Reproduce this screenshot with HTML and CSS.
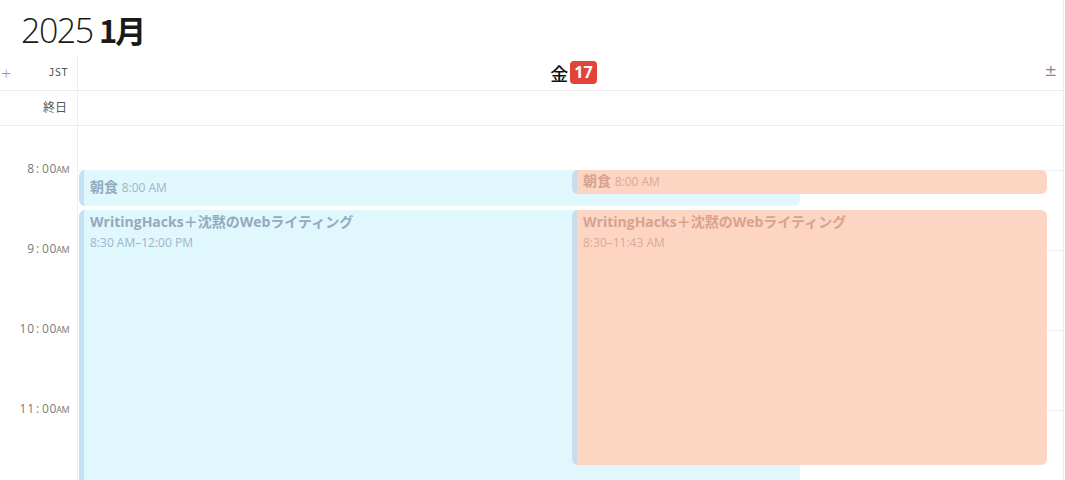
FILE: index.html
```html
<!DOCTYPE html>
<html lang="ja">
<head>
<meta charset="utf-8">
<link rel="stylesheet" href="styles.css">
</head>
<body>
<div class="cal">
  <h1 class="title"><span class="year">2025</span> <span class="month">1月</span></h1>
  <div class="head-row">
    <div class="gutter head-gutter"><span class="plus">+</span><span class="tz">JST</span></div>
    <div class="day-head"><span class="dow">金</span><span class="badge">17</span><span class="pm">±</span></div>
  </div>
  <div class="allday-row">
    <div class="gutter allday-label">終日</div>
    <div class="allday-cell"></div>
  </div>
  <div class="body">
    <div class="gutter times">
      <div class="tl">8<span class="colon">:</span>00<small>AM</small></div>
      <div class="tl">9<span class="colon">:</span>00<small>AM</small></div>
      <div class="tl">10<span class="colon">:</span>00<small>AM</small></div>
      <div class="tl">11<span class="colon">:</span>00<small>AM</small></div>
    </div>
    <div class="day">
      <div class="lines">
        <div class="hl"></div><div class="hl"></div><div class="hl"></div><div class="hl"></div><div class="hl"></div>
      </div>
      <div class="ev blue" style="top:44px;height:36px;left:1px;width:721px">
        <div class="ev-title">朝食 <span class="ev-time">8:00 AM</span></div>
      </div>
      <div class="ev blue tall" style="top:84px;height:320px;left:1px;width:721px">
        <div class="ev-title">WritingHacks＋沈黙のWebライティング</div>
        <div class="ev-sub">8:30 AM–12:00 PM</div>
      </div>
      <div class="ev orange short" style="top:44px;height:24px;left:494px;width:475px">
        <div class="ev-title">朝食 <span class="ev-time">8:00 AM</span></div>
      </div>
      <div class="ev orange tall" style="top:84px;height:255px;left:494px;width:475px">
        <div class="ev-title">WritingHacks＋沈黙のWebライティング</div>
        <div class="ev-sub">8:30–11:43 AM</div>
      </div>
    </div>
  </div>
</div>
</body>
</html>
```
FILE: styles.css
```css
* { box-sizing: border-box; }
html, body { margin: 0; padding: 0; background: #fff; }
body {
  font-family: "Open Sans", "Noto Sans CJK JP", sans-serif;
  color: #222;
  overflow: hidden;
  width: 1065px;
  height: 480px;
}
.cal { width: 1064px; border-right: 1px solid #ececec; height: 480px; overflow: hidden; }
.title {
  margin: 0;
  height: 55px;
  padding: 6px 0 0 21px;
  font-size: 34px;
  line-height: 48px;
  font-weight: 300;
  letter-spacing: -1.5px;
  color: #1a1a1a;
  font-family: "Open Sans", "Noto Sans CJK JP", sans-serif;
}
.title .month { font-weight: 700; font-size: 31px; letter-spacing: -2px; font-family: "Noto Sans CJK JP", sans-serif; margin-left: -1px; }
.gutter { width: 78px; flex: none; border-right: 1px solid #eeeeee; }
.head-row { display: flex; height: 36px; border-bottom: 1px solid #ececec; }
.head-gutter { display: flex; align-items: center; justify-content: space-between; padding: 0 9px 0 1px; }
.plus { font-size: 18px; color: #999; font-weight: 300; line-height: 1; margin-top: 1px; }
.tz { font-size: 10px; color: #555; letter-spacing: 0.5px; font-family: "DejaVu Sans Mono", monospace; }
.day-head { flex: 1; display: flex; align-items: center; justify-content: center; position: relative; padding-left: 6px; }
.dow { font-family: "Noto Sans CJK JP", sans-serif; font-size: 18px; font-weight: 500; color: #111; margin-right: 2px; }
.badge {
  background: #e2443a; color: #fff; font-weight: 700; font-size: 16px;
  border-radius: 4px; padding: 0 4px; line-height: 23px; height: 23px; display: inline-block;
  font-family: "Open Sans", sans-serif;
}
.pm { position: absolute; right: 6px; top: 7px; font-size: 15px; color: #888; font-family: "DejaVu Sans", sans-serif; }
.allday-row { display: flex; height: 35px; border-bottom: 1px solid #ececec; }
.allday-label {
  font-family: "Noto Sans CJK JP", sans-serif; font-size: 12px; color: #555;
  text-align: right; padding: 7px 10px 0 0;
}
.allday-cell { flex: 1; }
.body { display: flex; height: 360px; }
.times { padding-top: 35px; }
.tl {
  height: 80px; text-align: right; padding-right: 8px;
  font-size: 12px; color: #7a7a7a; letter-spacing: 0.8px;
  font-family: "Open Sans", sans-serif; line-height: 16px;
}
.tl .colon { margin: 0 2px 0 1px; }
.tl small { font-size: 9px; letter-spacing: -0.5px; font-family: "Open Sans", sans-serif; margin-left: -1px; }
.day { flex: 1; position: relative; }
.lines { padding-top: 44px; }
.hl { height: 80px; border-top: 1px solid #f0f0f0; }
.ev {
  position: absolute;
  border-radius: 6px;
  padding: 6px 6px;
  border-left: 5px solid #c6e1f3;
  overflow: hidden;
  font-family: "Noto Sans CJK JP", sans-serif;
}
.ev.blue { background: #e0f7fd; color: #92abbd; }
.ev.orange { background: #fdd5c3; color: #d7a290; border-left-color: #c8dcec; }
.ev.short { padding-top: 0; }
.ev.tall { padding-top: 1px; }
.ev-title { font-size: 14px; font-weight: 700; line-height: 22px; white-space: nowrap; font-family: "Open Sans", "Noto Sans CJK JP", sans-serif; }
.ev-time { font-size: 12px; font-weight: 400; font-family: "Open Sans", sans-serif; opacity: 0.85; }
.ev-sub { font-size: 12px; font-family: "Open Sans", sans-serif; line-height: 20px; opacity: 0.85; }
```
